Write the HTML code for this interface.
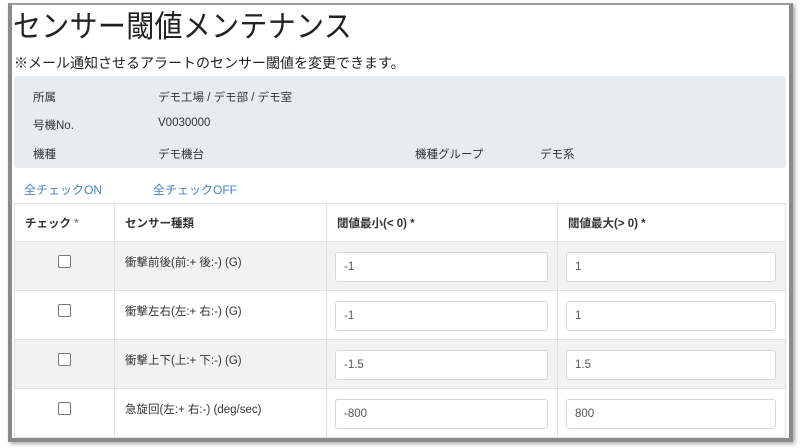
<!DOCTYPE html>
<html><head><meta charset="utf-8"><style>
*{box-sizing:border-box;margin:0;padding:0}
body{width:800px;height:448px;background:#fff;font-family:"Liberation Sans","Noto Sans CJK JP",sans-serif;color:#333;position:relative;overflow:hidden}
.frame{position:absolute;left:8px;top:3px;width:785px;height:439px;border:4px solid #8a8a8a;border-top:2px solid #9a9a9a;box-shadow:2px 2px 4px #aaa}
.a{position:absolute;white-space:nowrap}
h1{position:absolute;left:13px;top:5px;font-size:28px;line-height:40px;font-weight:normal;color:#222;letter-spacing:0.3px;transform:scaleY(1.1);transform-origin:left top}
.sub{left:14px;top:53px;font-size:14px;color:#222}
.info{position:absolute;left:14px;top:76px;width:772px;height:92px;background:#e9ecef;border-radius:3px}
.s{font-size:11.5px;color:#333}
.lnk{font-size:12px;color:#4a80c4;top:181px}
table{position:absolute;left:14px;top:203px;width:772px;border-collapse:collapse;font-size:11.5px;table-layout:fixed}
td,th{border:1px solid #dee2e6;text-align:left;vertical-align:top}
th{height:38px;vertical-align:middle;padding-left:10px;font-weight:bold;color:#333}
td{height:49px;padding:0 10px;position:relative}
td .t{position:absolute;top:12px;left:10px;white-space:nowrap}
tr.g td{background:#f2f2f2}
.cb{position:absolute;top:13px;left:43px;width:13px;height:13px;border:1px solid #777;border-radius:2px;background:#fff}
.in{position:absolute;top:10px;left:8px;right:9px;height:30px;border:1px solid #d6d9dc;border-radius:3px;background:#fff;padding:8px 8px;font-size:11.5px;color:#555}
</style></head><body>
<div class="frame"></div>
<h1>センサー閾値メンテナンス</h1>
<div class="a sub">※メール通知させるアラートのセンサー閾値を変更できます。</div>
<div class="info">
<div class="a s" style="left:19px;top:13px">所属</div><div class="a s" style="left:144px;top:13px">デモ工場 / デモ部 / デモ室</div>
<div class="a s" style="left:19px;top:41px">号機No.</div><div class="a s" style="left:144px;top:41px">V0030000</div>
<div class="a s" style="left:19px;top:70px">機種</div><div class="a s" style="left:144px;top:70px">デモ機台</div>
<div class="a s" style="left:401px;top:70px">機種グループ</div><div class="a s" style="left:526px;top:70px">デモ系</div>
</div>
<div class="a lnk" style="left:24px">全チェックON</div>
<div class="a lnk" style="left:153px">全チェックOFF</div>
<table>
<colgroup><col style="width:100px"><col style="width:212px"><col style="width:231px"><col></colgroup>
<tr><th>チェック <span style="color:#888">*</span></th><th>センサー種類</th><th>閾値最小(&lt; 0) *</th><th>閾値最大(&gt; 0) *</th></tr>
<tr class="g"><td><div class="cb"></div></td><td><span class="t">衝撃前後(前:+ 後:-) (G)</span></td><td><div class="in">-1</div></td><td><div class="in">1</div></td></tr>
<tr><td><div class="cb"></div></td><td><span class="t">衝撃左右(左:+ 右:-) (G)</span></td><td><div class="in">-1</div></td><td><div class="in">1</div></td></tr>
<tr class="g"><td><div class="cb"></div></td><td><span class="t">衝撃上下(上:+ 下:-) (G)</span></td><td><div class="in">-1.5</div></td><td><div class="in">1.5</div></td></tr>
<tr><td><div class="cb"></div></td><td><span class="t">急旋回(左:+ 右:-) (deg/sec)</span></td><td><div class="in">-800</div></td><td><div class="in">800</div></td></tr>
</table>
</body></html>
